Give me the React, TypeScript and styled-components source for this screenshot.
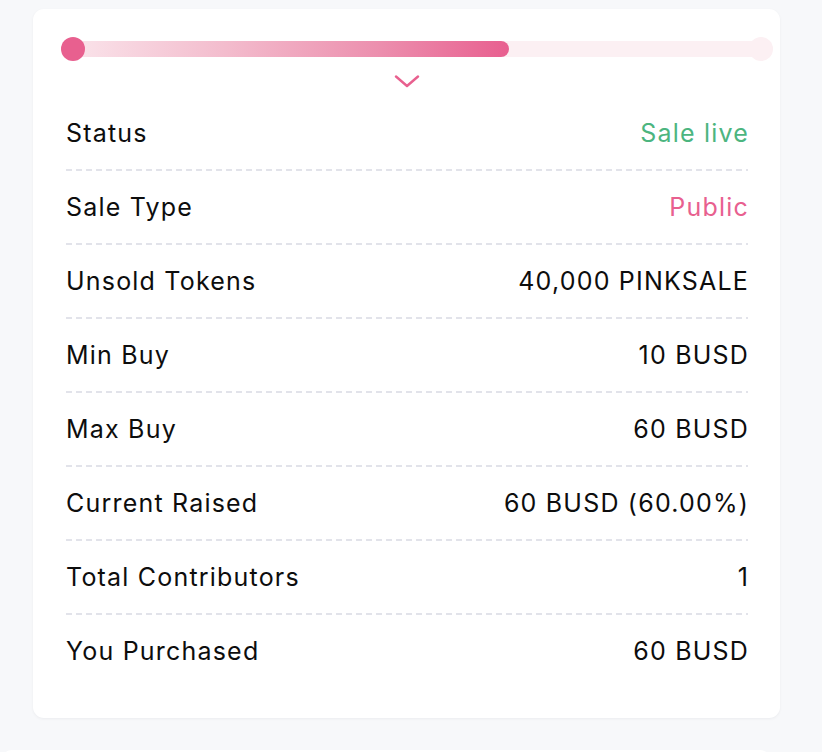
import React from "react";
import styled, { createGlobalStyle } from "styled-components";

const Global = createGlobalStyle`
  html, body { margin: 0; padding: 0; background: #f7f8fa; }
  body { font-family: Inter, "Noto Sans", "Liberation Sans", sans-serif; }
`;

const Page = styled.div`
  padding-top: 9px;
  height: 752px;
  box-sizing: border-box;
  overflow: hidden;
`;

const Card = styled.section`
  margin-left: 33px;
  width: 747px;
  box-sizing: border-box;
  background: #ffffff;
  border-radius: 11px;
  box-shadow: 0 1px 3px rgba(20, 20, 40, 0.05);
  padding: 28px 32px 29px 33px;
`;

const NextCard = styled.div`
  margin-top: 32px;
  margin-left: 1px;
  width: 770px;
  height: 40px;
  background: #ffffff;
  border-radius: 11px;
`;

const Progress = styled.div`
  position: relative;
  margin: 0 -25px 0 -5px;
  height: 24px;
  display: flex;
  align-items: center;
`;

const Track = styled.div`
  flex: 1;
  margin: 0 12px;
  height: 16px;
  border-radius: 8px;
  background: #fcf0f3;
  overflow: hidden;
  display: flex;
`;

const Fill = styled.div`
  height: 100%;
  border-radius: 8px;
  background: linear-gradient(90deg, #fae3ea 0%, #f3bccd 35%, #ec8fae 70%, #e85f8f 100%);
`;

const Dot = styled.span<{ $active?: boolean; $side: "left" | "right" }>`
  position: absolute;
  top: 0;
  ${(p) => (p.$side === "left" ? "left: 0;" : "right: 0;")}
  width: 24px;
  height: 24px;
  border-radius: 50%;
  background: ${(p) => (p.$active ? "#e8608f" : "#fcf0f3")};
`;

const Toggle = styled.div`
  display: flex;
  justify-content: center;
  margin-top: 14px;
  margin-left: -1px;
  height: 13px;
`;

const List = styled.dl`
  margin: 9px 0 0;
  padding: 0;
`;

const Row = styled.div`
  display: flex;
  justify-content: space-between;
  align-items: center;
  height: 72px;
  padding-bottom: 2px;
  background-image: repeating-linear-gradient(90deg, #e2e3ea 0 6px, transparent 6px 10px);
  background-size: 100% 2px;
  background-position: 0 100%;
  background-repeat: no-repeat;
  &:last-child {
    background-image: none;
  }
  font-size: 25px;
  letter-spacing: 1.2px;
  color: #0d0d0d;
`;

const Label = styled.dt`
  margin: 0;
`;

const Value = styled.dd<{ $tone?: "green" | "pink" }>`
  margin: 0 -1px 0 0;
  color: ${(p) => (p.$tone === "green" ? "#4cb57f" : p.$tone === "pink" ? "#e8608f" : "#0d0d0d")};
`;

const rows: { label: string; value: string; tone?: "green" | "pink" }[] = [
  { label: "Status", value: "Sale live", tone: "green" },
  { label: "Sale Type", value: "Public", tone: "pink" },
  { label: "Unsold Tokens", value: "40,000 PINKSALE" },
  { label: "Min Buy", value: "10 BUSD" },
  { label: "Max Buy", value: "60 BUSD" },
  { label: "Current Raised", value: "60 BUSD (60.00%)" },
  { label: "Total Contributors", value: "1" },
  { label: "You Purchased", value: "60 BUSD" },
];

export default function App() {
  const percent = 63.4;
  return (
    <>
      <Global />
      <Page>
        <Card>
          <Progress>
            <Track>
              <Fill style={{ width: `${percent}%` }} />
            </Track>
            <Dot $side="left" $active />
            <Dot $side="right" />
          </Progress>
          <Toggle>
            <svg width="26" height="13" viewBox="0 0 26 13" fill="none">
              <path d="M2 1.5 L13 11 L24 1.5" stroke="#e8608f" strokeWidth="2.4" strokeLinecap="round" strokeLinejoin="round" />
            </svg>
          </Toggle>
          <List>
            {rows.map((r) => (
              <Row key={r.label}>
                <Label>{r.label}</Label>
                <Value $tone={r.tone}>{r.value}</Value>
              </Row>
            ))}
          </List>
        </Card>
        <NextCard />
      </Page>
    </>
  );
}
